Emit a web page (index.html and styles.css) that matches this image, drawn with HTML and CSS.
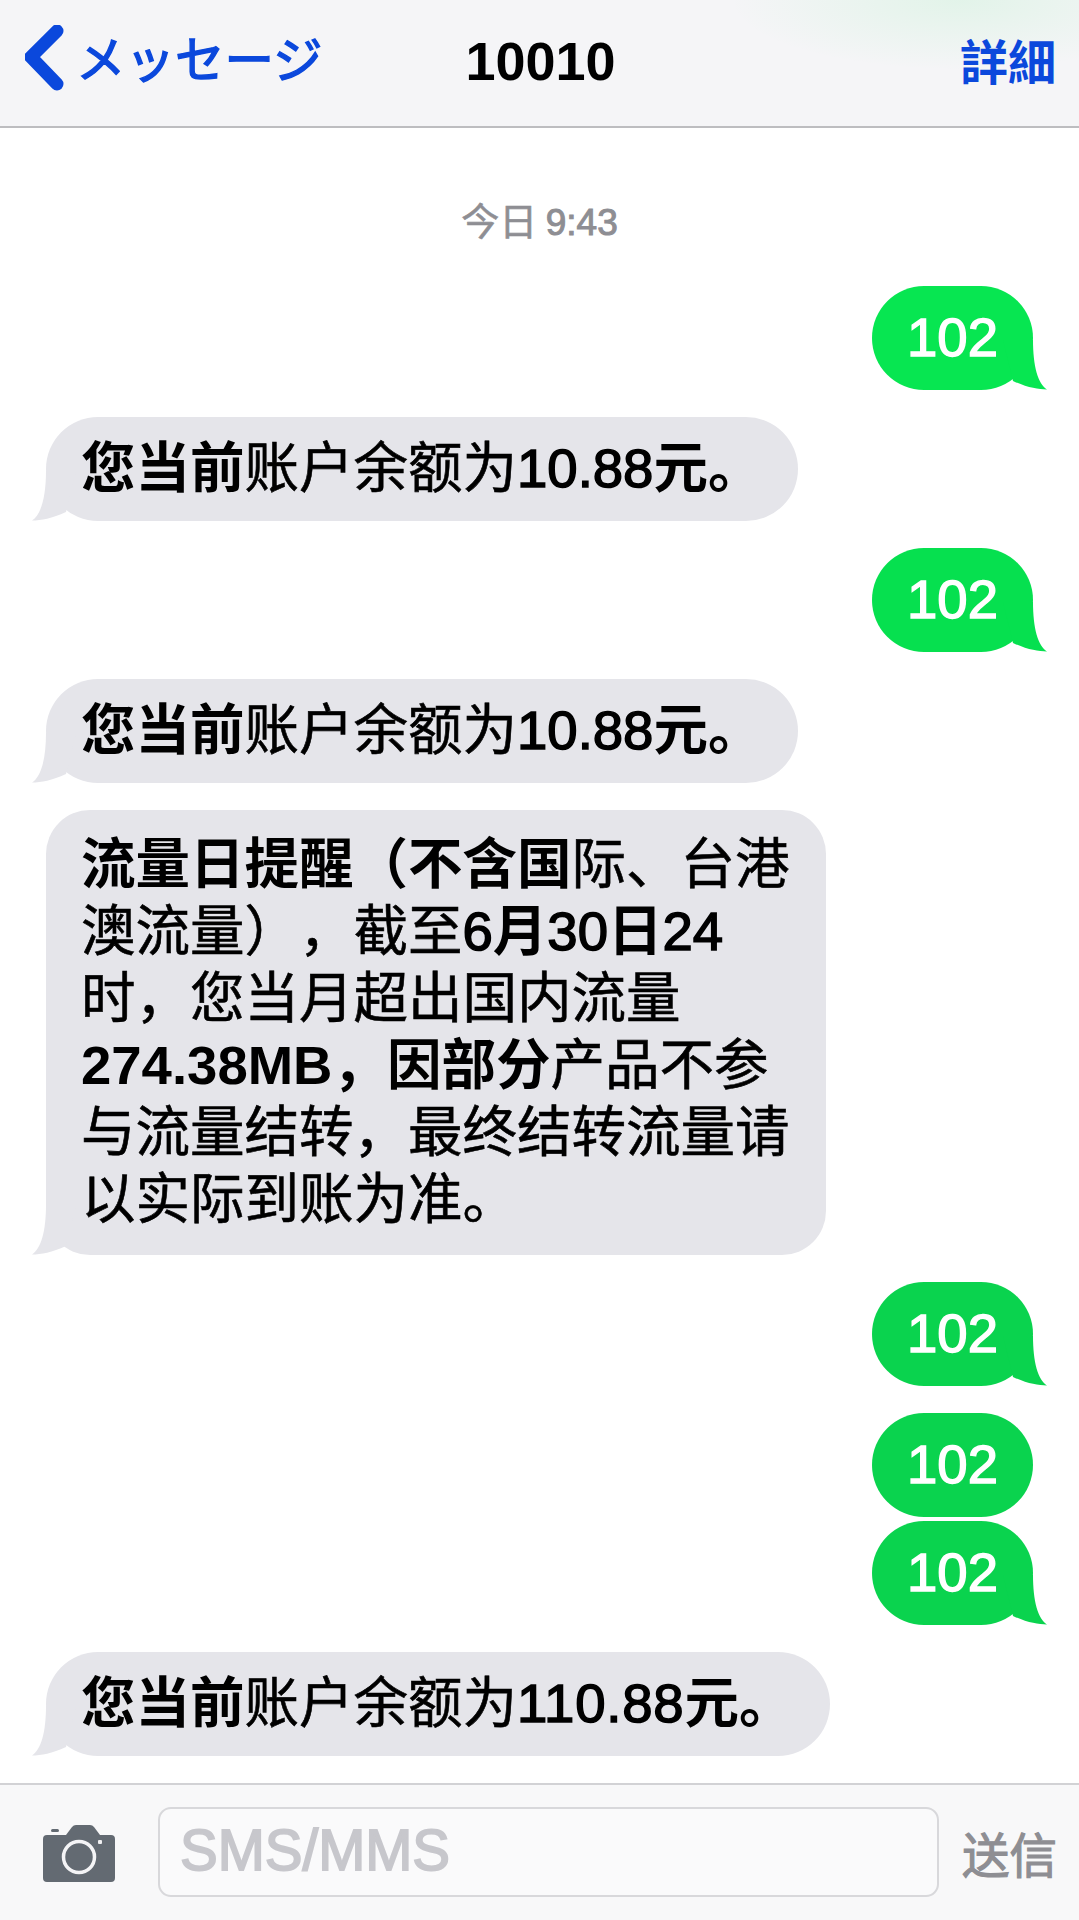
FILE: index.html
```html
<!DOCTYPE html>
<html lang="zh-CN">
<head>
<meta charset="utf-8">
<title>10010</title>
<link rel="stylesheet" href="styles.css">
</head>
<body>
<svg class="defs" width="0" height="0" aria-hidden="true">
  <symbol id="tail" viewBox="0 0 44 50">
    <path d="M30 0C30 26 35 44 44 49.500C35 49.500 24 47.500 10 41L0 0Z"/>
  </symbol>
</svg>
<div class="screen">
  <header class="nav">
    <a class="back">
      <svg class="chevron" viewBox="0 0 40 72" aria-hidden="true"><path d="M32 6L6 32L32 59"/></svg>
      <span>メッセージ</span>
    </a>
    <h1 class="title">10010</h1>
    <a class="details">詳細</a>
  </header>

  <main class="thread">
    <div class="stamp">今日 <span class="stamp-time">9:43</span></div>

    <div class="bubble sent green-1">102<svg class="tail"><use href="#tail"/></svg></div>
    <div class="bubble received"><b>您当前</b>账户余额为<span class="num">10.88</span><b>元。</b><svg class="tail"><use href="#tail"/></svg></div>
    <div class="bubble sent green-2">102<svg class="tail"><use href="#tail"/></svg></div>
    <div class="bubble received"><b>您当前</b>账户余额为<span class="num">10.88</span><b>元。</b><svg class="tail"><use href="#tail"/></svg></div>
    <div class="bubble received long"><b>流量日提醒（不含国</b>际、台港<br>澳流量），截至<span class="num">6</span><b>月</b><span class="num">30</span><b>日</b><span class="num">24</span><br>时，您当月超出国内流量<br><b>274.38MB，因部分</b>产品不参<br>与流量结转，最终结转流量请<br>以实际到账为准。<svg class="tail"><use href="#tail"/></svg></div>
    <div class="bubble sent green-3">102<svg class="tail"><use href="#tail"/></svg></div>
    <div class="bubble sent green-3">102</div>
    <div class="bubble sent green-3 grouped">102<svg class="tail"><use href="#tail"/></svg></div>
    <div class="bubble received"><b>您当前</b>账户余额为<span class="num wide">110.88</span><b>元。</b><svg class="tail"><use href="#tail"/></svg></div>
  </main>

  <footer class="composer">
    <svg class="camera" viewBox="0 0 72 57" aria-hidden="true">
      <path class="camera-body" d="M4 10H23L29 2Q30.500 0 33 0H47Q49.500 0 51 2L57 10H68Q72 10 72 14V53Q72 57 68 57H4Q0 57 0 53V14Q0 10 4 10Z"/>
      <rect class="camera-body" x="8" y="4" width="8" height="3" rx="1.500"/>
      <circle class="camera-lens" cx="36" cy="32" r="15.500"/>
      <rect class="camera-dot" x="55" y="15" width="4" height="4" rx="1"/>
    </svg>
    <div class="field">SMS/MMS</div>
    <span class="send">送信</span>
  </footer>
</div>
</body>
</html>
```

FILE: styles.css
```css
* { box-sizing: border-box; }

html, body { margin: 0; padding: 0; }

body {
  background: #fff;
  font-family: "Liberation Sans", "Noto Sans CJK SC", sans-serif;
  color: #000;
}

.defs { position: absolute; }

.screen {
  width: 1079px;
  height: 1920px;
  display: flex;
  flex-direction: column;
  overflow: hidden;
}

/* Navigation bar */
.nav {
  flex: none;
  height: 128px;
  padding: 0 23px 4px 25px;
  display: grid;
  grid-template-columns: 1fr auto 1fr;
  align-items: center;
  background:
    radial-gradient(ellipse 230px 70px at 960px 0, rgba(60, 230, 110, .10), rgba(60, 230, 110, 0) 100%),
    #f5f5f7;
  border-bottom: 2px solid #bdbdc0;
  color: #0b48dc;
  font-family: "Noto Sans CJK JP", sans-serif;
}

.back {
  display: flex;
  align-items: center;
  gap: 13px;
  font-size: 49.500px;
  line-height: 60px;
  -webkit-text-stroke: 1.400px currentColor;
}

.back span { transform: translateY(-4px); }

.chevron {
  width: 40px;
  height: 72px;
  margin-right: -2px;
  fill: none;
  stroke: currentColor;
  stroke-width: 13;
  stroke-linecap: round;
  stroke-linejoin: miter;
}

.title {
  margin: 0;
  color: #000;
  font: bold 54px/60px "Liberation Sans", sans-serif;
}

.details {
  justify-self: end;
  margin-bottom: 4px;
  font-size: 48px;
  line-height: 60px;
  font-weight: 700;
}

/* Conversation */
.thread {
  flex: 1;
  display: flex;
  flex-direction: column;
  align-items: flex-start;
  gap: 27px;
  padding: 68px 46px 0;
}

.stamp {
  align-self: center;
  margin-bottom: 13px;
  color: #8e8e93;
  font-size: 38px;
  line-height: 46px;
  font-family: "Noto Sans CJK JP", sans-serif;
  -webkit-text-stroke: .6px currentColor;
}

.stamp-time {
  font-family: "Liberation Sans", sans-serif;
  font-size: 37px;
  -webkit-text-stroke: 1px currentColor;
}

.bubble {
  position: relative;
  padding: 18px 36px 18px 35px;
  border-radius: 52px;
  font-size: 54.500px;
  line-height: 68px;
  white-space: nowrap;
  text-spacing-trim: space-all;
  -webkit-text-stroke: .6px currentColor;
}

.bubble b {
  font-weight: 700;
  -webkit-text-stroke: 0;
}

.num { -webkit-text-stroke: 1.500px currentColor; }

.wide { letter-spacing: .8px; }

.received {
  background: #e5e5ea;
  fill: #e5e5ea;
}

.long {
  padding: 21px 36px 22px 35px;
  border-radius: 44px;
  line-height: 67px;
}

.sent {
  align-self: flex-end;
  padding-right: 35px;
  color: #fff;
  -webkit-text-stroke: 1.400px currentColor;
}

.green-1 { background: #07e651; fill: #07e651; }
.green-2 { background: #06e04f; fill: #06e04f; }
.green-3 { background: #0ad34e; fill: #0ad34e; }

.grouped { margin-top: -23px; }

.tail {
  position: absolute;
  bottom: 0;
  width: 44px;
  height: 50px;
  -webkit-text-stroke: 0;
}

.sent .tail { right: -14px; }

.received .tail {
  left: -14px;
  transform: scaleX(-1);
}

/* Composer */
.composer {
  flex: none;
  height: 137px;
  padding: 22px 23px 0 43px;
  display: flex;
  align-items: flex-start;
  background: #f8f8f9;
  border-top: 2px solid #d2d2d5;
}

.camera {
  flex: none;
  width: 72px;
  height: 57px;
  margin: 18px 43px 0 0;
}

.camera-body { fill: #636a72; }
.camera-dot { fill: #f0f0f2; }

.camera-lens {
  fill: none;
  stroke: #f4f4f6;
  stroke-width: 3.500;
}

.field {
  flex: 1;
  height: 90px;
  padding-left: 20px;
  border: 2px solid #d8d8db;
  border-radius: 13px;
  background: #fafafb;
  color: #c7c7cc;
  font-size: 56.500px;
  line-height: 84px;
  -webkit-text-stroke: 1.800px currentColor;
}

.send {
  flex: none;
  width: 94px;
  margin-left: 23px;
  margin-top: 21px;
  color: #8e8e93;
  font-family: "Noto Sans CJK JP", sans-serif;
  font-size: 47.500px;
  line-height: 50px;
  -webkit-text-stroke: 1.200px currentColor;
  white-space: nowrap;
}
```
